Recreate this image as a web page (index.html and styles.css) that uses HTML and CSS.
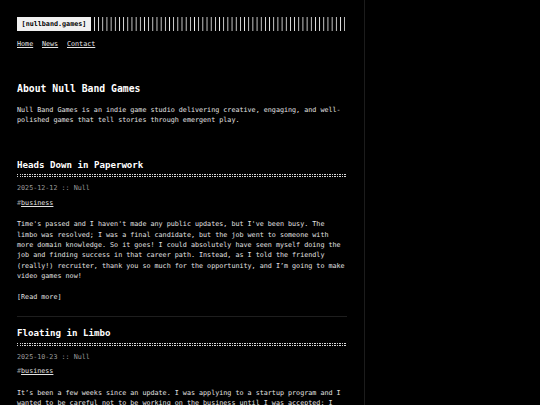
FILE: index.html
```html
<!DOCTYPE html>
<html lang="en">
<head>
<meta charset="utf-8">
<title>Null Band Games</title>
<link rel="stylesheet" href="styles.css">
</head>
<body>
<div class="container">
  <header class="header">
    <div class="header-logo">
      <a class="logo" href="#">[nullband.games]</a>
      <svg class="logo-bars" aria-hidden="true">
        <defs>
          <pattern id="bars" x="0" y="0" width="4.17" height="14" patternUnits="userSpaceOnUse">
            <rect x="0" y="0" width="0.85" height="14" fill="#f0f0f0"></rect>
          </pattern>
        </defs>
        <rect x="0" y="0" width="100%" height="14" fill="url(#bars)"></rect>
      </svg>
    </div>
    <nav class="menu">
      <a href="#">Home</a>
      <a href="#">News</a>
      <a href="#">Contact</a>
    </nav>
  </header>
  <main class="content">
    <section class="intro">
      <h1 class="intro-title">About Null Band Games</h1>
      <p class="intro-text">Null Band Games is an indie game studio delivering creative, engaging, and well-polished games that tell stories through emergent play.</p>
    </section>
    <article class="post">
      <h2 class="post-title"><a href="#">Heads Down in Paperwork</a></h2>
      <div class="post-meta">2025-12-12 :: Null</div>
      <div class="post-tags">#<a href="#">business</a></div>
      <p class="post-content">Time's passed and I haven't made any public updates, but I've been busy. The limbo was resolved; I was a final candidate, but the job went to someone with more domain knowledge. So it goes! I could absolutely have seen myself doing the job and finding success in that career path. Instead, as I told the friendly (really!) recruiter, thank you so much for the opportunity, and I’m going to make video games now!</p>
      <a class="read-more" href="#">[Read more]</a>
    </article>
    <article class="post">
      <h2 class="post-title"><a href="#">Floating in Limbo</a></h2>
      <div class="post-meta">2025-10-23 :: Null</div>
      <div class="post-tags">#<a href="#">business</a></div>
      <p class="post-content">It’s been a few weeks since an update. I was applying to a startup program and I wanted to be careful not to be working on the business until I was accepted; I didn’t want anything to get in the way of that process.</p>
      <a class="read-more" href="#">[Read more]</a>
    </article>
  </main>
</div>
</body>
</html>
```
FILE: styles.css
```css
* {
  box-sizing: border-box;
}

html,
body {
  margin: 0;
  padding: 0;
  background: #000;
}

body {
  font-family: "DejaVu Sans Mono", "Liberation Mono", monospace;
  font-size: 6.73px;
  line-height: 10.4px;
  color: #e2e2e2;
}

a {
  color: inherit;
}

.container {
  width: 365px;
  min-height: 405px;
  padding: 17px;
  border-right: 1px solid #1c1c1c;
}

.header-logo {
  display: flex;
  height: 14px;
}

.logo {
  display: block;
  background: #f0f0f0;
  color: #000;
  font-weight: bold;
  text-decoration: none;
  line-height: 14px;
  padding: 0 4.6px;
}

.logo-bars {
  display: block;
  flex: 1;
  height: 14px;
  margin-left: 3.2px;
  margin-right: 2px;
}

.menu {
  display: flex;
  gap: 8.8px;
  margin-top: 8.3px;
}

.menu a {
  color: #e6e6e6;
}

.intro-title {
  margin: 32.3px 0 0;
  font-size: 9.77px;
  line-height: 13px;
  font-weight: bold;
  color: #fff;
}

.intro-text {
  margin: 9.8px 0 0;
}

.post {
  margin-top: 32.9px;
  padding-bottom: 13.3px;
  border-bottom: 1px solid #1e1e1e;
}

.post + .post {
  margin-top: 10.8px;
}

.post-title {
  margin: 0;
  font-size: 9.13px;
  line-height: 12px;
  font-weight: bold;
  color: #fff;
}

.post-title a {
  text-decoration: none;
}

.post-title::after {
  content: "";
  display: block;
  height: 3.33px;
  margin-top: 3.5px;
  background:
    repeating-linear-gradient(90deg, #d8d8d8 0 1.25px, transparent 1.25px 2.5px) top / 100% 1.25px no-repeat,
    repeating-linear-gradient(90deg, #d8d8d8 0 1.25px, transparent 1.25px 2.5px) bottom / 100% 1.25px no-repeat;
}

.post-meta {
  margin-top: 5.8px;
  color: #9a9a9a;
}

.post-tags {
  margin-top: 4px;
  color: #9a9a9a;
}

.post-tags a {
  color: #e2e2e2;
}

.post-content {
  margin: 11.2px 0 0;
}

.read-more {
  display: inline-block;
  margin-top: 10.3px;
  text-decoration: none;
}
```
